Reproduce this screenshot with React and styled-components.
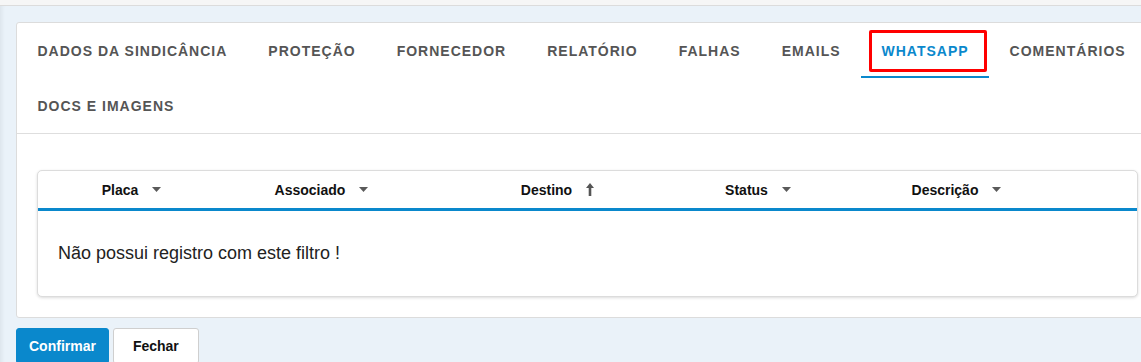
import React from "react";
import styled, { createGlobalStyle } from "styled-components";

const GlobalStyle = createGlobalStyle`
  html, body {
    margin: 0;
    padding: 0;
    background: #eaf2f9;
    overflow: hidden;
    font-family: "Liberation Sans", Arial, sans-serif;
  }
`;

const tabs = [
  "Dados da Sindicância",
  "Proteção",
  "Fornecedor",
  "Relatório",
  "Falhas",
  "Emails",
  "WhatsApp",
  "Comentários",
  "Docs e Imagens",
];

const columns = [
  { label: "Placa", sort: "none" },
  { label: "Associado", sort: "none" },
  { label: "Destino", sort: "asc" },
  { label: "Status", sort: "none" },
  { label: "Descrição", sort: "none" },
];

export default function App() {
  const active = "WhatsApp";

  return (
    <>
      <GlobalStyle />
      <TopStrip />
      <Page>
        <Card>
          <TabList>
            {tabs.map((t) => (
              <Tab key={t} $active={t === active}>
                {t}
                {t === active && <Highlight />}
              </Tab>
            ))}
          </TabList>
          <CardBody>
            <Panel>
              <HeaderRow>
                {columns.map((c) => (
                  <HeaderCell key={c.label}>
                    {c.label}
                    {c.sort === "asc" ? <SortUp /> : <SortDown />}
                  </HeaderCell>
                ))}
                <HeaderCell />
              </HeaderRow>
              <EmptyRow>Não possui registro com este filtro !</EmptyRow>
            </Panel>
          </CardBody>
        </Card>
        <Actions>
          <Button $primary>Confirmar</Button>
          <Button>Fechar</Button>
        </Actions>
      </Page>
    </>
  );
}

function SortDown() {
  return (
    <Arrow width="9" height="5" viewBox="0 0 9 5">
      <path d="M0 0 H9 L4.5 5 Z" fill="#5a5a5a" />
    </Arrow>
  );
}

function SortUp() {
  return (
    <Arrow width="8" height="13" viewBox="0 0 8 13">
      <path d="M4 0 L8 5 H5.3 V13 H2.7 V5 H0 Z" fill="#555" />
    </Arrow>
  );
}

const TopStrip = styled.div`
  height: 5px;
  background: #f6f6f6;
  border-bottom: 1px solid #dcdcdc;
`;

const Page = styled.div`
  padding: 16px 0 0 16px;
  box-shadow: inset 5px 0 4px -3px rgba(0, 0, 0, 0.06);
  height: 400px;
`;

const Card = styled.div`
  width: 1140px;
  background: #fff;
  border: 1px solid #dcdcdc;
  border-radius: 3px;
`;

const TabList = styled.ul`
  list-style: none;
  margin: 0;
  padding: 0;
  display: flex;
  flex-wrap: wrap;
  width: 1138px;
  border-bottom: 1px solid #dedede;
`;

const Tab = styled.li`
  position: relative;
  height: 55px;
  box-sizing: border-box;
  padding: 2px 20.5px 0;
  display: flex;
  align-items: center;
  font-size: 14px;
  font-weight: bold;
  letter-spacing: 1px;
  text-transform: uppercase;
  color: ${(p) => (p.$active ? "#0a88cc" : "#555")};
  border-bottom: 2px solid ${(p) => (p.$active ? "#0a88cc" : "transparent")};
  cursor: pointer;
`;

const Highlight = styled.span`
  position: absolute;
  left: 8px;
  right: 2px;
  top: 7px;
  height: 42px;
  box-sizing: border-box;
  border: 3px solid #ff0000;
  border-radius: 2px;
`;

const CardBody = styled.div`
  padding: 36px 20px 20px;
`;

const Panel = styled.div`
  width: 1101px;
  box-sizing: border-box;
  border: 1px solid #dcdcdc;
  border-radius: 5px;
  box-shadow: 0 1px 3px rgba(0, 0, 0, 0.14);
  background: #fff;
`;

const HeaderRow = styled.div`
  display: grid;
  grid-template-columns: 187px 193px 279px 122px 275px 1fr;
  height: 37px;
  border-bottom: 3px solid #0a88cc;
`;

const HeaderCell = styled.div`
  display: flex;
  align-items: center;
  justify-content: center;
  gap: 14px;
  font-size: 14px;
  font-weight: bold;
  color: #111;
`;

const Arrow = styled.svg`
  display: block;
  flex: none;
`;

const EmptyRow = styled.div`
  height: 85px;
  display: flex;
  align-items: center;
  padding-left: 20px;
  font-size: 18px;
  color: #222;
`;

const Actions = styled.div`
  display: flex;
  gap: 4px;
  margin-top: 10px;
`;

const Button = styled.button`
  height: 36px;
  font-family: "Liberation Sans", Arial, sans-serif;
  font-size: 14px;
  font-weight: bold;
  border-radius: 3px;
  cursor: pointer;
  background: ${(p) => (p.$primary ? "#0a88cc" : "#fff")};
  color: ${(p) => (p.$primary ? "#fff" : "#111")};
  border: 1px solid ${(p) => (p.$primary ? "#0a88cc" : "#cfcfcf")};
  padding: ${(p) => (p.$primary ? "0 12px" : "0 19px")};
`;
